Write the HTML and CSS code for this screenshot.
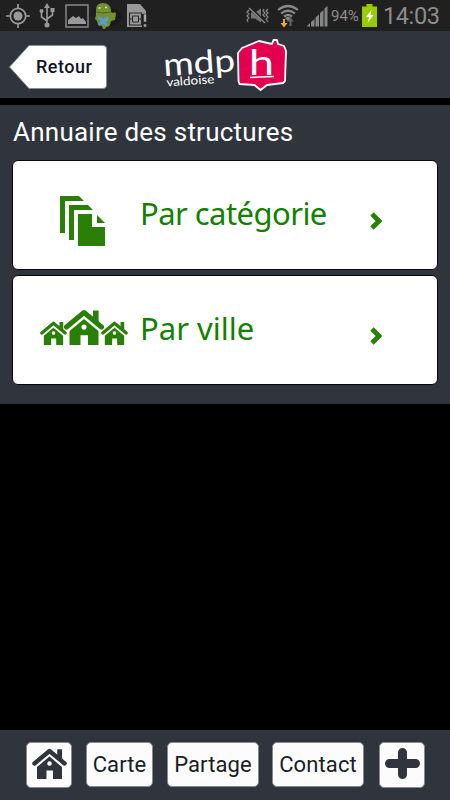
FILE: index.html
```html
<!DOCTYPE html>
<html lang="fr">

<head>
    <meta charset="UTF-8">
    <meta name="viewport" content="width=device-width, initial-scale=1.0">
    <title>Annuaire des structures</title>
    <link rel="stylesheet" href="styles.css">
</head>

<body>

    <!-- symboles partagés -->
    <svg width="0" height="0" class="symbols">
        <symbol id="house" viewBox="0 0 40 36">
            <path d="M2.500 18 20 3.500 37.500 18" fill="none" stroke="currentColor" stroke-width="5" stroke-linecap="round" stroke-linejoin="round" />
            <path d="M29 1.500h5.600v12L29 8.500z" />
            <path fill-rule="evenodd" d="M20 10 34.500 22v14H24v-9.800h-7.500V36H5.500V22zM20 15.500a2.600 2.600 0 1 0 .01 0z" />
        </symbol>
        <symbol id="chevron" viewBox="0 0 12 18">
            <path d="M2 2 9 9 2 16" fill="none" stroke="currentColor" stroke-width="4.800" />
        </symbol>
    </svg>

    <div class="status">
        <svg class="ico-gps" width="24" height="26" viewBox="0 0 24 26">
            <circle cx="12" cy="13" r="7.700" fill="none" stroke="#999" stroke-width="1.700" />
            <circle cx="12" cy="13" r="4.500" fill="#999" />
            <path d="M12 1v5M12 20v5M0 13h5M19 13h5" stroke="#999" stroke-width="1.700" />
        </svg>
        <svg class="ico-usb" width="16" height="25" viewBox="0 0 16 25">
            <path d="M8 3v19M8 18 2.500 14V9M8 16l5.500-4V8" fill="none" stroke="#999" stroke-width="1.600" />
            <path d="M8 0 11 5H5z" fill="#999" />
            <circle cx="8" cy="22" r="2.500" fill="#999" />
            <circle cx="2.500" cy="8" r="2" fill="#999" />
            <path d="M11.500 5h4v4h-4z" fill="#999" />
        </svg>
        <svg class="ico-img" width="24" height="24" viewBox="0 0 24 24">
            <path d="M1 1h22v22H1z" fill="none" stroke="#888" stroke-width="1.500" />
            <path d="M3 20v-4l5-4 3 2 3-2 2 3 2-1 3 4v2z" fill="#999" />
        </svg>
        <svg class="ico-droid" width="26" height="27" viewBox="0 0 26 27">
            <circle cx="17" cy="14" r="9" fill="#191919" />
            <path d="M1 7Q1 0 8 0t8 7v2l2 1 2-1 1 2-1 6-4 1-1 4q-1 2-4 2l-1 2H8l-1-3q-5-1-5-5L0 16l1-4z" fill="#73902f" />
            <path d="M1 9q7 2 15 0" fill="none" stroke="#4d691f" />
            <circle cx="4.500" cy="5" r="1" fill="#ddd" />
            <circle cx="11" cy="4.500" r="1" fill="#ddd" />
            <path d="m3 13 5 2.500 5-2.500 1 3-3 3 2 3-2 1-3-2-4 2-1-2 3-3-3-2z" fill="#5c9bc9" />
        </svg>
        <svg class="ico-sim" width="22" height="26" viewBox="0 0 22 26">
            <path d="M1 1h13l6 7v3h-4v13H1z" fill="#999" />
            <path d="M3.500 10h12v12h-12z" fill="none" stroke="#282828" stroke-width="1.200" />
            <path d="M6.500 13h6v6h-6zM3 16h3M13 16h3" fill="none" stroke="#282828" />
            <path d="M17.500 11h3v8h-3zM17.500 21h3v3h-3z" fill="#aaa" stroke="#282828" stroke-width=".6" />
        </svg>

        <svg class="ico-mute" width="24" height="17" viewBox="0 0 24 17">
            <path d="M5 5.500h4l6-4v14l-6-4H5z" fill="#777" />
            <path d="m4 1 16 15" stroke="#202020" stroke-width="3" />
            <path d="m3 1 16 15" stroke="#888" stroke-width="1.500" />
            <path d="m3 3-2 2 2 2-2 2 2 2-2 2 1 2M18 2l-1 2 2 2-2 2 2 2M22 2l-2 2 2 2-2 2 2 2-2 2 2 3" fill="none" stroke="#888" stroke-width="1.200" />
        </svg>
        <svg class="ico-wifi" width="22" height="24" viewBox="0 0 22 24">
            <path d="M1 6Q11-2 21 6M4 9.500q7-5.500 14 0M7 12.500q4-3 8 0" fill="none" stroke="#888" stroke-width="2.200" />
            <path d="m11 17-3-3q3-2 6 0z" fill="#888" />
            <path d="M6 15v4H3.500L7 23.500l3.500-4.500H8v-4z" fill="#f9a62b" />
            <path d="M12.500 22v-4.500H10l3.500-4 3.500 4h-2.500V22z" fill="#666" />
        </svg>
        <svg class="ico-signal" width="21" height="21" viewBox="0 0 21 21">
            <path d="M0 20.500V20l3-3v3.500zM4 20.500V16l3.500-3v7.500zM8.500 20.500v-9l3.500-3v12zM13 20.500V7l3.500-3v16.500zM17.500 20.500V2.500L20.500 0v20.500z" fill="#858585" />
        </svg>
        <span class="percent">94%</span>
        <svg class="ico-batt" width="15" height="23" viewBox="0 0 15 23">
            <path d="M4.500 0h6v2.500H15V23H0V2.500h4.500z" fill="#99cc00" />
            <path d="M9.500 6 4 13h3l-1.500 6L11.500 11h-3z" fill="#fff" />
        </svg>
        <span class="clock">14:03</span>
    </div>

    <div class="header">
        <a class="back" href="#">
            <svg width="98" height="44" viewBox="0 0 98 44">
                <path d="M20 .5h74q3.500 0 3.500 3.500v36q0 3.500-3.500 3.500H20L.5 22z" fill="#fff" stroke="#8a8c90" />
            </svg>
            <span>Retour</span>
        </a>
        <svg class="logo" width="128" height="66" viewBox="-2 0 128 66">
            <g transform="rotate(-4 2 39)" fill="#fff">
                <text class="logo-mdp" x="-1" y="38" textLength="72" lengthAdjust="spacingAndGlyphs">mdp</text>
                <text class="logo-val" x="1" y="48.500" textLength="48" lengthAdjust="spacingAndGlyphs">valdoise</text>
            </g>
            <path d="M73 15 77 10 94 3 107 6l1.500-4H112l1 4 6 2 2 5-1 30-2 2-16 2-6.500 5-6-5-15-1-1-3z" fill="#e2004f" stroke="#fff" stroke-width="1.800" stroke-linejoin="round" />
            <text class="logo-h" x="84" y="36.500" textLength="25" lengthAdjust="spacingAndGlyphs">h</text>
            <path d="M85 39.500 109 38.500" stroke="#fff" stroke-width="1.500" />
        </svg>
    </div>

    <div class="content">
        <h1>Annuaire des structures</h1>
        <a class="card" href="#">
            <span class="card-icon">
                <svg class="ico-files" width="46" height="50" viewBox="0 0 46 50">
                    <path d="M0 0h19l5 5H5v32H0zM9 9h19l5 5H14v30H9zM18 18h14v13h13v19H18zM37 19l8 8h-8z" />
                </svg>
            </span>
            <span class="label categorie">Par catégorie</span>
            <svg class="chevron" width="12" height="18"><use href="#chevron" /></svg>
        </a>
        <a class="card" href="#">
            <span class="card-icon houses">
                <svg width="27" height="24"><use href="#house" /></svg>
                <svg width="40" height="36"><use href="#house" /></svg>
                <svg width="27" height="24"><use href="#house" /></svg>
            </span>
            <span class="label ville">Par ville</span>
            <svg class="chevron" width="12" height="18"><use href="#chevron" /></svg>
        </a>
    </div>

    <div class="footer">
        <a class="btn square home" href="#"><svg width="35" height="31"><use href="#house" /></svg></a>
        <a class="btn carte" href="#">Carte</a>
        <a class="btn partage" href="#">Partage</a>
        <a class="btn contact" href="#">Contact</a>
        <a class="btn square plus" href="#">
            <svg width="35" height="31" viewBox="0 0 35 31">
                <path d="M17.500 4.500v22M4.500 15.500h26" stroke="currentColor" stroke-width="9" stroke-linecap="round" />
            </svg>
        </a>
    </div>

</body>

</html>
```
FILE: styles.css
```css
body {
    margin: 0;
    height: 800px;
    display: flex;
    flex-direction: column;
    overflow: hidden;
    background-color: #000;
    font-family: Roboto, Arial, sans-serif;
}

a {
    color: inherit;
    text-decoration: none;
}

svg {
    display: block;
    flex-shrink: 0;
}

.symbols {
    position: absolute;
}

/* barre de statut */
.status {
    height: 31px;
    display: flex;
    align-items: flex-start;
    box-sizing: border-box;
    padding-top: 3px;
    padding-left: 6px;
    background-color: #202020;
    color: #8c8c8c;
}

.ico-usb {
    margin-left: 9px;
}

.ico-img {
    margin: 1px 0 0 10px;
}

.ico-droid {
    margin-left: 6px;
}

.ico-sim {
    margin-left: 5px;
}

.ico-mute {
    margin: 4px 0 0 98px;
}

.ico-wifi {
    margin: 1px 0 0 7px;
}

.ico-signal {
    margin: 3px 0 0 8px;
}

.percent {
    width: 31px;
    margin-left: 3px;
    font-size: 15px;
    line-height: 27px;
}

.ico-batt {
    margin-top: 1px;
}

.clock {
    margin-left: 6px;
    font-size: 23.500px;
    line-height: 26px;
    letter-spacing: -0.400px;
}

/* en-tete */
.header {
    height: 67px;
    display: flex;
    background-color: #30343c;
    margin-bottom: 7px;
}

.back {
    display: grid;
    width: 98px;
    height: 44px;
    margin: 14px 0 0 9px;
    color: #10151f;
    font-size: 18px;
    font-weight: 500;
    letter-spacing: 0.5px;
    line-height: 43px;
}

.back svg,
.back span {
    grid-area: 1 / 1;
}

.back span {
    padding-left: 27px;
}

.logo {
    margin: 7px 0 0 56px;
}

.logo-mdp {
    font-family: Lato, sans-serif;
    font-size: 32px;
    font-weight: 400;
}

.logo-val {
    font-family: Lato, sans-serif;
    font-size: 12px;
    font-weight: 400;
}

.logo-h {
    font-family: Lato, sans-serif;
    font-size: 35px;
    fill: #fff;
}

/* contenu */
.content {
    height: 299px;
    box-sizing: border-box;
    padding: 0 12px;
    background-color: #30343c;
}

h1 {
    margin: 0 0 0 1px;
    color: #fff;
    font-size: 26px;
    font-weight: 400;
    letter-spacing: 0.24px;
    line-height: 55px;
    white-space: nowrap;
}

.card {
    display: flex;
    height: 108px;
    margin-bottom: 5px;
    border: 1px solid #05080c;
    border-radius: 6px;
    background-color: #fff;
    color: #2a8007;
    fill: currentColor;
}

.card-icon {
    width: 127px;
}

.ico-files {
    margin: 35px 0 0 47px;
}

.houses {
    display: flex;
    align-items: flex-end;
    height: 69px;
}

.houses svg:first-child {
    margin-left: 27px;
}

.houses svg:nth-child(2) {
    margin: 0 -3px;
}

.label {
    width: 231px;
    color: #138000;
    font-family: "Trebuchet MS", "Noto Sans", sans-serif;
    font-size: 31px;
    line-height: 105px;
    white-space: nowrap;
}

.categorie {
    letter-spacing: -0.560px;
}

.chevron {
    margin: 51px 0 0 -1px;
}

/* barre du bas */
.footer {
    height: 70px;
    display: flex;
    align-items: flex-start;
    box-sizing: border-box;
    margin-top: auto;
    padding: 12px 0 0 26px;
    background-color: #30343c;
    color: #2d323b;
    fill: currentColor;
}

.btn {
    height: 45px;
    box-sizing: border-box;
    border: 1px solid #888a8e;
    border-radius: 5px;
    background-color: #fcfcfc;
    color: #181d26;
    font-size: 22px;
    letter-spacing: 0.1px;
    line-height: 43px;
    text-align: center;
}

.square {
    width: 46px;
    height: 46px;
    padding: 5px 0 0 5px;
    color: #30343c;
}

.carte {
    width: 67px;
    margin-left: 14px;
}

.partage {
    width: 92px;
    margin-left: 14px;
}

.contact {
    width: 92px;
    margin-left: 13px;
}

.plus {
    margin-left: 15px;
}
```
